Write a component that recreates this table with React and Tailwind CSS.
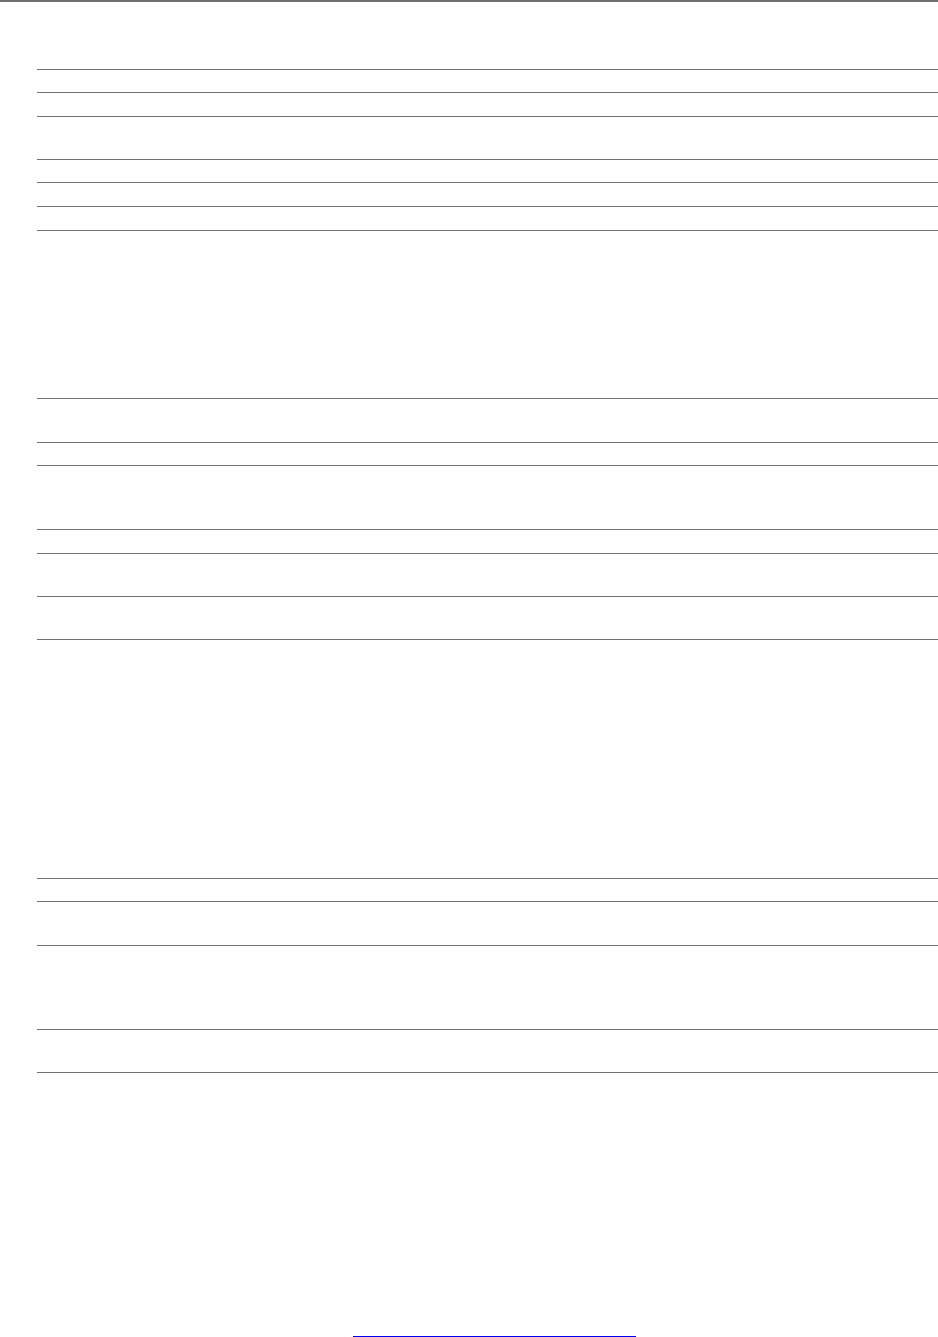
import React from "react";

// gaps between consecutive rules, top to bottom
const rows = [23, 24, 43, 23, 24, 24, 168, 44, 23, 64, 24, 43, 43, 239, 23, 44, 84, 43];

const App = () => {
	return (
		<div className="min-h-[1337px] bg-white border-t-2 border-[#6e6e6e] font-['Liberation_Sans',sans-serif]">
			<div className="pl-[37px] pt-[67px]">
				<div className="flex flex-col">
					{rows.map((h, i) => (
						<div key={i} className="border-t border-[#737373]" style={{ height: h }} />
					))}
					<div className="border-t border-[#737373] h-[1px]" />
				</div>
			</div>
			<div className="pt-[262px] pl-[353px]">
				<a href="#" className="block w-[283px] h-[2px] border-b border-[#0000ee]" />
			</div>
		</div>
	);
};

export default App;
